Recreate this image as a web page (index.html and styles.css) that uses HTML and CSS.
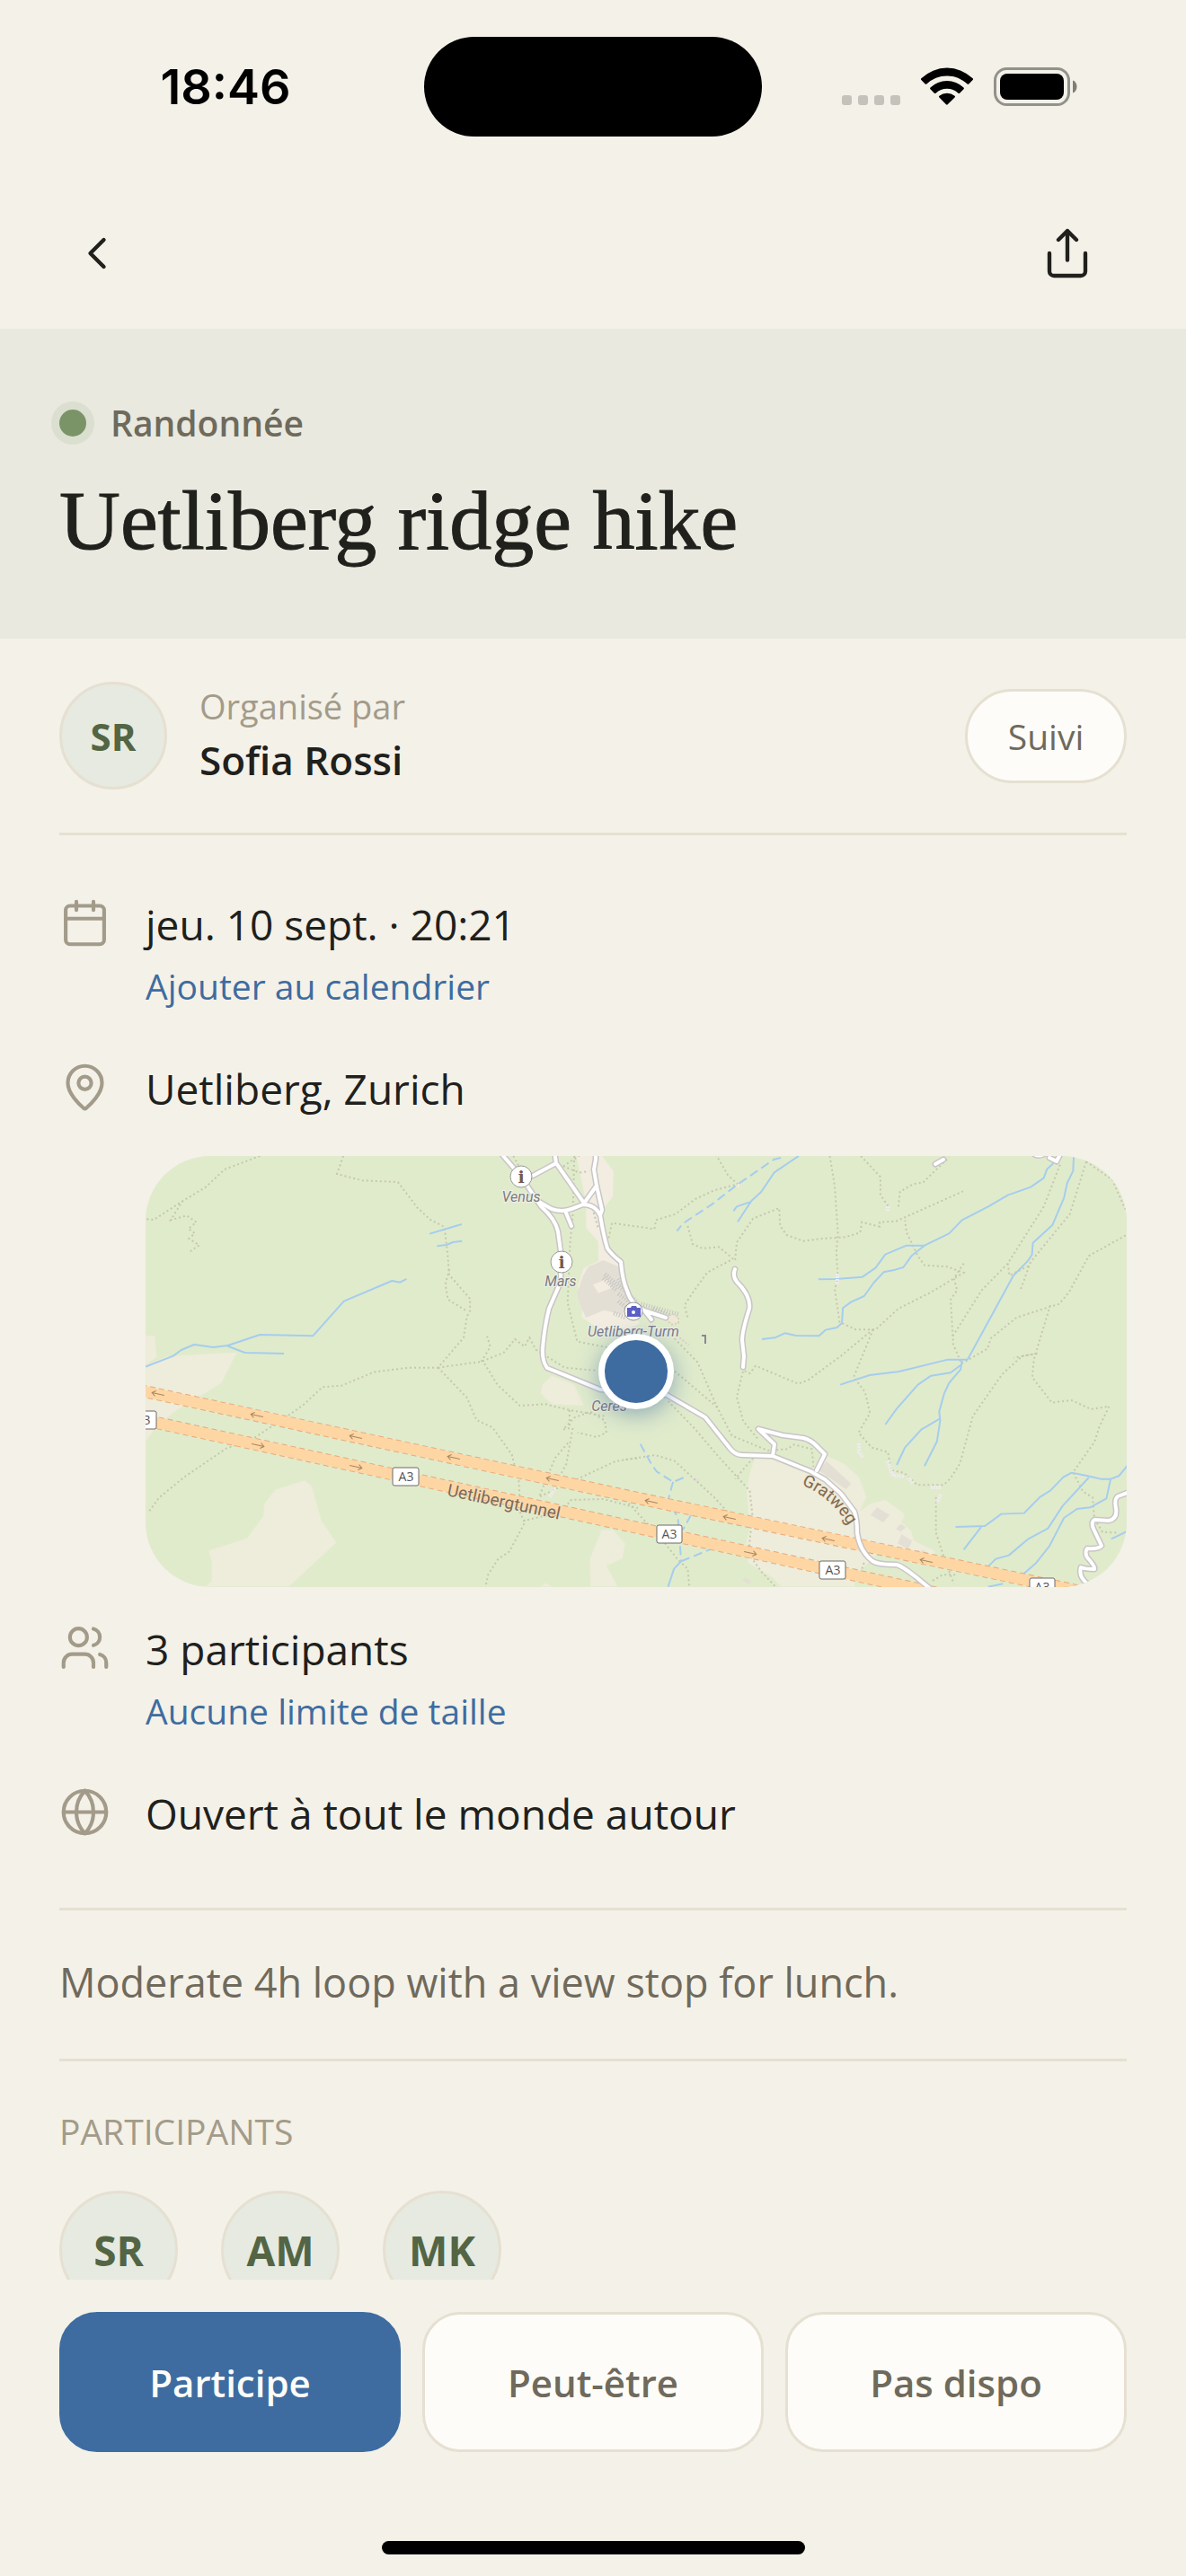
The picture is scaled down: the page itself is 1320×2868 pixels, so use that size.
FILE: index.html
```html
<!DOCTYPE html>
<html lang="fr">
<head>
    <meta charset="UTF-8">
    <meta name="viewport" content="width=device-width, initial-scale=1.0">
    <title>Uetliberg ridge hike</title>
    <link rel="stylesheet" href="styles.css">
</head>
<body>

<!-- Barre d'état -->
<div class="status-bar">
    <div class="status-time">18:46</div>
    <div class="island"></div>
    <div class="status-icons">
        <div class="signal"><i></i><i></i><i></i><i></i></div>
        <svg class="wifi" viewBox="0 0 17 12">
            <path d="M8.5 2.46c2.47 0 4.84.95 6.63 2.65.13.13.35.13.49 0l1.28-1.3a.36.36 0 0 0 0-.51 12.02 12.02 0 0 0-16.8 0 .36.36 0 0 0 0 .51l1.28 1.3c.14.13.36.13.49 0A9.6 9.6 0 0 1 8.5 2.46z"/>
            <path d="M8.5 6.68c1.35 0 2.66.51 3.66 1.42.14.13.35.13.48 0l1.29-1.3a.37.37 0 0 0 0-.52 7.89 7.89 0 0 0-10.86 0 .37.37 0 0 0 0 .52l1.29 1.3c.13.13.34.13.48 0A5.45 5.45 0 0 1 8.5 6.68z"/>
            <path d="M11.02 9.53a.35.35 0 0 0 0-.51 3.95 3.95 0 0 0-5.04 0 .35.35 0 0 0 0 .51l2.23 2.27c.16.15.34.15.5 0z"/>
        </svg>
        <svg class="battery" viewBox="0 0 93 43">
            <rect x="1.5" y="1.5" width="82" height="40" rx="13" fill="none" stroke="#93918b" stroke-width="3"/>
            <rect x="7" y="7" width="71" height="29" rx="8"/>
            <path d="M88 14.500c6 2 6 12 0 14z" fill="#7f7d78"/>
        </svg>
    </div>
</div>

<!-- Navigation -->
<nav class="nav">
    <button class="nav-btn" aria-label="Retour">
        <svg viewBox="0 0 24 24"><path d="M15 18l-6-6 6-6"/></svg>
    </button>
    <button class="nav-btn" aria-label="Partager">
        <svg viewBox="0 0 24 24"><path d="M4 12v8a2 2 0 0 0 2 2h12a2 2 0 0 0 2-2v-8M16 6l-4-4-4 4M12 2v13"/></svg>
    </button>
</nav>

<main class="content">
    <header class="hero">
        <div class="category"><span class="category-dot"></span>Randonnée</div>
        <h1>Uetliberg ridge hike</h1>
    </header>

    <!-- Organisateur -->
    <section class="host">
        <div class="avatar">SR</div>
        <div class="host-text">
            <div class="host-label">Organisé par</div>
            <div class="host-name">Sofia Rossi</div>
        </div>
        <button class="follow-btn">Suivi</button>
    </section>

    <!-- Détails -->
    <section class="details">
        <div class="row">
            <svg class="row-icon" viewBox="0 0 24 24"><rect x="3" y="4" width="18" height="18" rx="2"/><path d="M8 2v4M16 2v4M3 10h18"/></svg>
            <div class="row-body">
                <div class="row-title">jeu. 10 sept. · 20:21</div>
                <a class="row-link" href="#">Ajouter au calendrier</a>
            </div>
        </div>

        <div class="row">
            <svg class="row-icon" viewBox="0 0 24 24"><path d="M20 10c0 5-5.500 10.200-7.400 11.800a1 1 0 0 1-1.200 0C9.500 20.200 4 15 4 10a8 8 0 0 1 16 0z"/><circle cx="12" cy="10" r="3"/></svg>
            <div class="row-body">
                <div class="row-title">Uetliberg, Zurich</div>
                <div class="map">
                    <svg viewBox="0 0 1092 480" preserveAspectRatio="xMidYMid slice">
                        <defs>
                            <g id="arrow"><path d="M7 0H-7M-3-3l-4 3 4 3"/></g>
                            <path id="gratweg" d="M730 366q34 14 54 48"/>
                        </defs>

                        <!-- clairières et zones bâties -->
                        <g transform="translate(-12 -17) scale(.3571 .3333)">
                            <path class="clearing" d="M34 652h28l6 70 132-8 118-7-48 103-140 90-60 50-36 55z"/>
                            <path class="forest" d="M34 750l40-18 46-20L68 722z"/>
                            <path class="clearing" d="M230 1370l120-42 50-73 5-45 35-45 90-30 22 20 30 115 46 73-148 147H220l20-20v-65zM1300 785l70 30 30 70-100-5-35-35 5-30zM1455 1300h35l38 45-8 50-50 25 35 70h-85l-2-90zM1265 1490l15-12 20 12z"/>
                        </g>
                        <g transform="translate(538 -17) scale(.3635 .3333)">
                            <path class="clearing" d="M385 1062L440 1058 550 1105 600 1050 660 1080 705 1125 727 1190 705 1240 740 1212 785 1200 845 1248 835 1275 865 1305 872 1335 935 1370 935 1390 760 1370 750 1395 695 1445 690 1490H465L440 1460 365 1410 355 1370 370 1290 360 1170 370 1110z"/>
                            <path class="building" d="M605 1070l75 75-15 20-85-65zM760 1225l38 25-20 25-38-25zM832 1280l16 12-16 14-14-10zM835 1315l32 22-12 28-32-20zM900 1366l14 12-18 16-12-14zM355 1460l20 12-8 10-20-14zM200 1125l20 8-10 8-14-6z"/>
                        </g>
                        <g transform="translate(398 0) scale(.3333)">
                            <path class="town" d="M245 0h85l38 50-2 85-34 45 14 120 50 50 14 80 25 70 20 60-40 20h-90l-62-40 0-60-14-45 20-60 50-25-2-65-40-45 0-85z"/>
                            <path class="block" d="M285 370l50-22 50 22 22 60 20 50-30 50-60-15-60 25-15-30-15-50 20-60z"/>
                            <path class="town" d="M300 430l45-18 18 28-45 18z"/>
                            <path class="hatch" d="M340 395l110 95M335 408l45 42M385 410l40 60M385 460l50 40M385 485l30 25M370 525l40 15M460 495l130 35M500 510l90 40"/>
                            <path class="sand" d="M545 540l20-12 20 10v20l-25 5zM580 600l40 32"/>
                        </g>

                        <!-- sentiers -->
                        <g class="trail" transform="translate(-12 -17) scale(.3571 .3333)">
                            <path d="M390 51l-110 45-60 60-70 45-90 63-30-3M150 200l-38 65 50-15 30 22-25 22 20 15-18 18 32 22-30 22"/>
                            <path d="M650 51l-20 60 80 22 110 5 60 85 40 40 45 25 10 90 5 70 65 80 0 40-10 20-10 70-40 50-40 50-90 0-110 15-100 45-60 5-60 60-40 30-120 85-80 30-130 95-80 70-30 45"/>
                            <path d="M980 430l-12 50 8 50 60 40M945 758l90 100 30 75 50 25 60 90 22 90 5 110 15 25-50 100-35 25-30 50-15 70"/>
                            <path d="M945 758l135-20 70-30 35-45 30 25 15-30 20 40 90 60 100 10M1080 738l28-50-10-35M1090 745l40 70 70 70 80-5 75 20 110 20M1355 900l0 60-20 5 35-40 50-20 45 30 5 40-30 15-60-15M1365 960l-20 120-40 80M1350 1010l-40 50-50 130 120-60 60-30 60-30 68-10M1210 1270l120-30 30-40 100-3 108 30"/>
                            <path d="M1370 51l-5 200-8 90-8 200 30 130 120 25M1180 51l20 40"/>
                            <path d="M1335 85l50-34M1335 85l50 22 30-5M1430 240l15 55"/>
                        </g>
                        <g class="trail" transform="translate(538 -17) scale(.3635 .3333)">
                            <path d="M-62 325l10-50 130 20 5-30 60-20 60-50 60-30 70-20-30-30-35-65M180 285l15 60 30 15 50-5 50 45 5-60 50-80 80-35 3 60 20 30 50 20 60-8 70-5 45-15 5-35 55 15 0-15 50-3 205-100"/>
                            <path d="M615 51l15 100 10 160-5 60 5 90-10 35 15 110 50 25h60l70-70 100-55 100-65-50-20-70-5-20-30-35-80-5-40M710 51l60 70 0 60 25 40M825 220l5-50 40-25 30-5 80-85"/>
                            <path d="M748 630l-60 160 35 50 15 70-35 65 40 50 50 15 10 60 40 10 40 40h80l20-20 30-50 40-160 90-140 60-60 50-10-75 15-60"/>
                            <path d="M748 630l-100 90-100 80-30 12-130-60-18 25-20-10-20 90 20 80 45 60M1025 410l-30 50 10 40-20 30 8 150 25 65 80-50 10-35 80-70 130-45 30-40 60-120 115-70M1290 550l-50 180-5 60 60 85 60-8 60 30 55-10-30 70-15 50-65 100 30 65 30 20 5 70 25 45 50 3"/>
                            <path d="M1320 80l-50 140-110 190-80 90-90 155M1400 70l-50 175-120 160-30 90M1160 410l5 40 65-35M1400 70l80 60 40 100M940 1190v120l30 100 25 70M720 1410l-10 30M930 1470l30-20 45 0"/>
                            <path d="M130 650l80 90 60 150 45 95 110 50 60-5 20-15 55 15 5 60M140 770l130 120M120 870l80 90 70 90 100 120 8 80-12 130 40 60 60 70M380 1060l-55 70M-10 1065l90-15 60 20 60 60 60 60 50 60M-10 1200l50 60 60 70 50 70 30 30 5 60"/>
                            <path d="M310 400l-70 40-40 60-30 50 10 40"/>
                        </g>

                        <!-- ruisseaux -->
                        <g class="stream" transform="translate(-12 -17) scale(.3571 .3333)">
                            <path d="M34 755l86-36 25-20 40-18 60 9 45-6 100-36 165 4 97-116 150-68 25 5 20-11M285 684l58 24 122 3M919 311l100-32M942 352l30-4 20-9 28-4"/>
                        </g>
                        <g class="stream" transform="translate(538 -17) scale(.3635 .3333)">
                            <path d="M520 51l-75 55-40 65-30 30-42 70M320 235l10-15 40-15"/>
                            <path d="M1300 75l-20 20-10 30-40 30-70 27-60 38-80 45-40 45-75 40-40 35-25 38-25 8-35 8-30 35-30 45-40 20-25 20-3 50-15 15-35 8-20 20-70-1-35-8-30 15-40 5M905 350h-55l-65 30-30 45-40 30-80 7-55 1"/>
                            <path d="M1362 51l-2 50-18 40-10 50-35 90-60 60-3 40-12 20-45 50-40 80-100 200h-60l-150 40-90 12-90 32M1020 735l-5 30-35 45-15 35-15 60 3 30-10 70-38 82M1015 750l-30 25-60 10-40 30-65 80-35 53M950 930l-55 35-50 60-25 58"/>
                            <path d="M1530 1080l-30 40-25 10h-30l-40-10-50-11-25 15-40 45-30 20-50 55-70 3-50 40-90 3M1080 1288l-55 78M1408 1125l-80 95-45 75-60 35-60 55-40 12-30 33M1475 1130l-13 65-50 30-40 5-40 30-45 95-40 55-47 45M1525 1305l-48 25M1100 1490l45-10M120 1490l18-60 22-25"/>
                            <path class="dashed" d="M465 57l-20 5-120 90-70 60-90 65-18 25M35 1013l35 70 15 22 50 35 32-14M135 1140l-15 60 30 60 10 145M190 1250l-25 50M160 1405l100-45"/>
                        </g>

                        <!-- autoroute A3 en tunnel -->
                        <g class="tunnel">
                            <path class="tunnel-edge" d="M-6 261L548 381l550 116M-6 293l554 121 380 83"/>
                            <path class="tunnel-fill" d="M-6 261L548 381l550 116M-6 293l554 121 380 83"/>
                        </g>
                        <g class="arrows">
                            <use href="#arrow" transform="translate(14 265) rotate(12)"/>
                            <use href="#arrow" transform="translate(124 289) rotate(12)"/>
                            <use href="#arrow" transform="translate(234 313) rotate(12)"/>
                            <use href="#arrow" transform="translate(343 336) rotate(12)"/>
                            <use href="#arrow" transform="translate(453 360) rotate(12)"/>
                            <use href="#arrow" transform="translate(563 385) rotate(12)"/>
                            <use href="#arrow" transform="translate(650 403) rotate(12)"/>
                            <use href="#arrow" transform="translate(760 427) rotate(12)"/>
                            <use href="#arrow" transform="translate(869 451) rotate(12)"/>
                            <use href="#arrow" transform="translate(125 322) rotate(192)"/>
                            <use href="#arrow" transform="translate(234 346) rotate(192)"/>
                            <use href="#arrow" transform="translate(673 442) rotate(192)"/>
                        </g>

                        <!-- routes -->
                        <g class="road-edge">
                            <path id="roads" d="M393-6L418 23 440 56Q456 70 459 84L462 106V140L449 170Q444 190 442 214 441 228 447 236L506 260 580 266 623 291 650 325Q656 333 664 333L698 334 740 351 756 360 774 376 789 396Q792 405 792 420 795 440 809 451 815 455 836 455 845 458 865 475L876 484M438 51L452 59Q463 63 474 59L487 54Q500 54 506 66 510 90 514 103 518 109 529 118 531 140 536 150 540 165 555 172L579 180M431 22L457 8 487 51M455-6L457 8M501-6V4L499 15 502 33 508 60 506 66M502 33L487 54M467 61L474 78M555 172L563 182M698 334L700 321 682 304 709 311 732 314Q740 316 746 322L756 332 747 350M656 126Q653 134 658 140 674 156 672 170 664 195 664 205L666 223 665 235M879 9l9-5M1020-6l-6 12-8-4M985-6q7 10 18 2M1098 373L1082 379Q1078 382 1080 392 1082 404 1072 406L1056 405Q1052 408 1055 415L1064 434Q1060 438 1048 437 1045 441 1048 447 1058 458 1056 460 1046 460 1041 458 1038 468 1048 476"/>
                        </g>
                        <use class="road-fill" href="#roads"/>
                        <path class="steps" d="M794 320v10l5 6M826 340l6 16 12 1M849 358l5 7M874 369h12M885 377l-4 9M770 131v12M826 56v6M659 33h3M456 370l-7 10"/>

                        <!-- libellés -->
                        <g class="badge">
                            <rect x="-18" y="284" width="30" height="20" rx="2"/><text x="-3" y="299">A3</text>
                            <rect x="275" y="347" width="29" height="20" rx="2"/><text x="290" y="362">A3</text>
                            <rect x="569" y="411" width="28" height="20" rx="2"/><text x="583" y="426">A3</text>
                            <rect x="750" y="451" width="29" height="20" rx="2"/><text x="765" y="466">A3</text>
                            <rect x="984" y="470" width="28" height="20" rx="2"/><text x="998" y="485">A3</text>
                        </g>
                        <text class="road-name" transform="translate(335 378) rotate(12)">Uetlibergtunnel</text>
                        <text class="road-name"><textPath href="#gratweg">Gratweg</textPath></text>
                        <g class="place">
                            <circle cx="418" cy="23" r="12"/><text class="info" x="418" y="30">i</text>
                            <circle cx="463" cy="118" r="12"/><text class="info" x="463" y="125">i</text>
                            <circle cx="543" cy="173" r="10"/>
                            <path class="camera" d="M536 169h4l1-2h5l1 2h4v10h-15z"/>
                            <circle class="lens" cx="543" cy="174" r="2"/>
                            <text x="418" y="51">Venus</text>
                            <text x="462" y="145">Mars</text>
                            <text class="tower" x="543" y="201">Uetliberg-Turm</text>
                            <text x="516" y="284">Ceres</text>
                        </g>
                        <path class="fragment" d="M619 200h4v9"/>
                    </svg>
                    <span class="marker"></span>
                </div>
            </div>
        </div>

        <div class="row">
            <svg class="row-icon" viewBox="0 0 24 24"><path d="M16 21v-2a4 4 0 0 0-4-4H6a4 4 0 0 0-4 4v2"/><circle cx="9" cy="7" r="4"/><path d="M22 21v-2a4 4 0 0 0-3-3.870M16 3.130a4 4 0 0 1 0 7.750"/></svg>
            <div class="row-body">
                <div class="row-title">3 participants</div>
                <a class="row-link" href="#">Aucune limite de taille</a>
            </div>
        </div>

        <div class="row">
            <svg class="row-icon" viewBox="0 0 24 24"><circle cx="12" cy="12" r="10"/><path d="M2 12h20M12 2a14.500 14.500 0 0 0 0 20 14.500 14.500 0 0 0 0-20"/></svg>
            <div class="row-body">
                <div class="row-title">Ouvert à tout le monde autour</div>
            </div>
        </div>
    </section>

    <p class="description">Moderate 4h loop with a view stop for lunch.</p>

    <!-- Participants -->
    <section class="people">
        <h2>PARTICIPANTS</h2>
        <div class="people-list">
            <div class="avatar avatar-lg">SR</div>
            <div class="avatar avatar-lg">AM</div>
            <div class="avatar avatar-lg">MK</div>
        </div>
    </section>
</main>

<!-- Réponse -->
<footer class="footer">
    <div class="actions">
        <button class="action active">Participe</button>
        <button class="action">Peut-être</button>
        <button class="action">Pas dispo</button>
    </div>
    <div class="home-bar"></div>
</footer>

</body>
</html>
```

FILE: styles.css
```css
* {
    margin: 0;
    padding: 0;
    box-sizing: border-box;
}

body {
    height: 100vh;
    display: flex;
    flex-direction: column;
    overflow: hidden;
    font-family: 'Open Sans', sans-serif;
    background-color: #f4f1e8;
    color: #20201c;
}

button {
    font-family: inherit;
    cursor: pointer;
}

/* Barre d'état */
.status-bar {
    display: grid;
    grid-template-columns: 1fr 376px 1fr;
    align-items: center;
    padding: 41px 0 34px;
    flex-shrink: 0;
}

.status-time {
    padding-left: 30px;
    text-align: center;
    font-family: Inter, sans-serif;
    font-size: 54px;
    font-weight: 600;
    color: #000;
}

.island {
    height: 111px;
    border-radius: 56px;
    background-color: #000;
}

.status-icons {
    display: flex;
    justify-content: center;
    align-items: flex-end;
    gap: 23px;
    padding-right: 33px;
}

.signal {
    display: flex;
    gap: 7px;
    padding-bottom: 1px;
}

.signal i {
    width: 11px;
    height: 11px;
    border-radius: 3px;
    background-color: #c5c2bb;
}

.wifi {
    width: 58px;
    height: 43px;
}

.battery {
    width: 93px;
    height: 43px;
}

/* Navigation */
.nav {
    display: flex;
    justify-content: space-between;
    padding: 30px 66px 18px 42px;
    flex-shrink: 0;
}

.nav-btn {
    display: flex;
    align-items: center;
    justify-content: center;
    width: 132px;
    height: 132px;
    border: none;
    background: none;
}

.nav-btn svg {
    width: 60px;
    height: 60px;
    fill: none;
    stroke: #20201c;
    stroke-width: 1.75;
    stroke-linecap: round;
    stroke-linejoin: round;
}

.content {
    flex: 1;
    min-height: 0;
    overflow-y: auto;
    scrollbar-width: none;
}

/* En-tête */
.hero {
    padding: 78px 66px 75px;
    background-color: #e9e9df;
}

.category {
    display: flex;
    align-items: center;
    gap: 27px;
    font-size: 39px;
    line-height: 54px;
    font-weight: 600;
    color: #6f6a5c;
}

.category-dot {
    width: 30px;
    height: 30px;
    border-radius: 50%;
    background-color: #7a9468;
    box-shadow: 0 0 0 9px #dbdfd0;
}

h1 {
    margin-top: 24px;
    font-family: 'Liberation Serif', serif;
    font-size: 94px;
    line-height: 114px;
    font-weight: 400;
    -webkit-text-stroke: 1px #20201c;
}

/* Organisateur */
.host {
    display: flex;
    align-items: center;
    gap: 36px;
    margin: 0 66px;
    padding: 48px 0;
    border-bottom: 3px solid #e6e0d2;
}

.avatar {
    display: flex;
    align-items: center;
    justify-content: center;
    width: 120px;
    height: 120px;
    border: 3px solid #e6e0d2;
    border-radius: 50%;
    background-color: #e6eae0;
    color: #536544;
    font-size: 42px;
    font-weight: 700;
}

.avatar-lg {
    width: 132px;
    height: 132px;
    font-size: 46px;
}

.host-text {
    flex: 1;
}

.host-label {
    font-size: 38px;
    line-height: 54px;
    color: #a39b8a;
}

.host-name {
    font-size: 44px;
    line-height: 66px;
    font-weight: 600;
}

.follow-btn {
    width: 180px;
    height: 105px;
    border: 3px solid #e6e0d2;
    border-radius: 53px;
    background-color: #fdfcf8;
    color: #6f6a5c;
    font-size: 39px;
    font-weight: 500;
}

/* Détails */
.details {
    display: flex;
    flex-direction: column;
    gap: 36px;
    margin: 0 66px;
    padding: 66px 0 72px;
    border-bottom: 3px solid #e6e0d2;
}

.row {
    display: flex;
    gap: 39px;
}

.row-icon {
    flex-shrink: 0;
    width: 57px;
    height: 57px;
    margin-top: 3px;
    fill: none;
    stroke: #a39b8a;
    stroke-width: 1.75;
    stroke-linecap: round;
    stroke-linejoin: round;
}

.row-body {
    flex: 1;
}

.row-title {
    font-size: 46px;
    line-height: 66px;
    font-weight: 500;
}

.row-link {
    display: block;
    margin-top: 9px;
    padding-bottom: 18px;
    font-size: 39px;
    line-height: 54px;
    color: #3e6ca0;
    text-decoration: none;
}

/* Carte */
.map {
    position: relative;
    height: 480px;
    margin-top: 42px;
    border-radius: 72px;
    overflow: hidden;
    background-color: #e0ebcc;
}

.map svg {
    display: block;
    width: 100%;
    height: 100%;
}

.map path {
    vector-effect: non-scaling-stroke;
}

.clearing {
    fill: #eeecda;
}

.forest {
    fill: #e0ebcc;
}

.town {
    fill: #f2ede0;
}

.block,
.building {
    fill: #e3dfd5;
}

.hatch {
    fill: none;
    stroke: #c4c3c0;
    stroke-width: 5;
    stroke-dasharray: 1 2;
}

.sand {
    fill: #f0e8d6;
    stroke: #d6cfbf;
    stroke-width: 2;
    stroke-dasharray: 2 2;
}

.trail {
    fill: none;
    stroke: #c5c8ac;
    stroke-width: 2;
    stroke-dasharray: 2 3;
}

.stream {
    fill: none;
    stroke: #a5cdee;
    stroke-width: 2;
    stroke-linejoin: round;
}

.dashed {
    stroke-dasharray: 10 5;
}

.tunnel {
    fill: none;
}

.tunnel-edge {
    stroke: #e9ab7c;
    stroke-width: 14;
    stroke-dasharray: 6 4;
}

.tunnel-fill {
    stroke: #fed6a3;
    stroke-width: 12;
}

.arrows {
    fill: none;
    stroke: #a98660;
    stroke-width: 1;
}

#roads {
    fill: none;
    stroke-linecap: round;
    stroke-linejoin: round;
}

.road-edge {
    stroke: #c9c5c6;
    stroke-width: 7;
}

.road-fill {
    stroke: #fff;
    stroke-width: 4;
}

.steps {
    fill: none;
    stroke: #efebee;
    stroke-width: 4;
    stroke-dasharray: 2 1;
}

.badge rect {
    fill: #fff;
    stroke: #6b6b6b;
    stroke-width: 1;
}

.badge text {
    fill: #555;
    font-size: 14px;
    font-weight: 500;
    text-anchor: middle;
}

.road-name {
    fill: #7d6a56;
    font-family: Roboto, sans-serif;
    font-size: 19px;
    paint-order: stroke;
    stroke: #f3e3c6;
    stroke-width: 1;
}

.place circle {
    fill: #fff;
    stroke: #999;
    stroke-width: 1;
}

.place text {
    fill: #7c7a80;
    font-family: Roboto, sans-serif;
    font-size: 16px;
    font-style: italic;
    text-anchor: middle;
    paint-order: stroke;
    stroke: #f0f1e6;
    stroke-width: 2;
}

.place .info {
    fill: #74574c;
    font-family: 'DejaVu Serif', serif;
    font-size: 19px;
    font-weight: 700;
    font-style: normal;
    stroke: none;
}

.place .tower {
    fill: #77788c;
}

.camera {
    fill: #5c5fc6;
}

.place .lens {
    stroke: none;
}

.fragment {
    fill: none;
    stroke: #8b8790;
    stroke-width: 2;
}

.marker {
    position: absolute;
    top: 50%;
    left: 50%;
    width: 84px;
    height: 84px;
    margin: -42px 0 0 -42px;
    border: 7px solid #fff;
    border-radius: 50%;
    background-color: #3e6ca0;
    box-shadow: 0 6px 24px rgba(62, 108, 160, 0.5);
}

/* Description */
.description {
    margin: 0 66px;
    padding: 42px 0 48px;
    border-bottom: 3px solid #e6e0d2;
    font-size: 45px;
    line-height: 75px;
    color: #6f6a5c;
}

/* Participants */
.people {
    padding: 51px 66px;
}

h2 {
    font-size: 39px;
    line-height: 54px;
    font-weight: 500;
    color: #a39b8a;
}

.people-list {
    display: flex;
    gap: 48px;
    margin-top: 39px;
}

/* Réponse */
.footer {
    flex-shrink: 0;
    padding: 36px 66px 24px;
    background-color: #f4f1e8;
}

.actions {
    display: flex;
    gap: 24px;
}

.action {
    flex: 1;
    height: 156px;
    border: 3px solid #e6e0d2;
    border-radius: 42px;
    background-color: #fdfcf8;
    color: #6f6a5c;
    font-size: 42px;
    font-weight: 600;
}

.action.active {
    border-color: #3e6ca0;
    background-color: #3e6ca0;
    color: #fdfcf8;
}

.home-bar {
    width: 471px;
    height: 15px;
    margin: 99px auto 0;
    border-radius: 8px;
    background-color: #000;
}
```
